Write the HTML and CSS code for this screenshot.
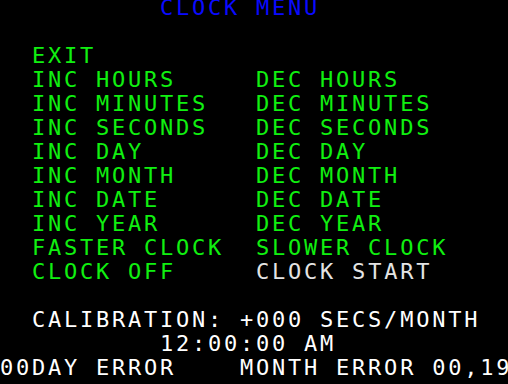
FILE: index.html
```html
<!DOCTYPE html>
<html>
<head>
<meta charset="utf-8">
<link rel="stylesheet" href="styles.css">
</head>
<body>
<div class="screen">
<div class="line blue">          CLOCK MENU</div>
<div class="line"> </div>
<div class="line green">  EXIT</div>
<div class="line green">  INC HOURS     DEC HOURS</div>
<div class="line green">  INC MINUTES   DEC MINUTES</div>
<div class="line green">  INC SECONDS   DEC SECONDS</div>
<div class="line green">  INC DAY       DEC DAY</div>
<div class="line green">  INC MONTH     DEC MONTH</div>
<div class="line green">  INC DATE      DEC DATE</div>
<div class="line green">  INC YEAR      DEC YEAR</div>
<div class="line green">  FASTER CLOCK  SLOWER CLOCK</div>
<div class="line green">  CLOCK OFF     <span class="gray">CLOCK START</span></div>
<div class="line"> </div>
<div class="line white">  CALIBRATION: +000 SECS/MONTH</div>
<div class="line white">          12:00:00 AM</div>
<div class="line white">00DAY ERROR    MONTH ERROR 00,19</div>
</div>
</body>
</html>
```
FILE: styles.css
```css
html, body {
  margin: 0;
  padding: 0;
  background: #000;
  width: 508px;
  height: 384px;
  overflow: hidden;
}
.screen {
  margin-top: -4px;
  font-family: "DejaVu Sans Mono", monospace;
  font-size: 22px;
  line-height: 24px;
  letter-spacing: 2.76px;
}
.line {
  white-space: pre;
  height: 24px;
}
.blue { color: #0a0aff; }
.green { color: #10f010; }
.white { color: #ffffff; }
.gray { color: #e4e4e4; }
```
